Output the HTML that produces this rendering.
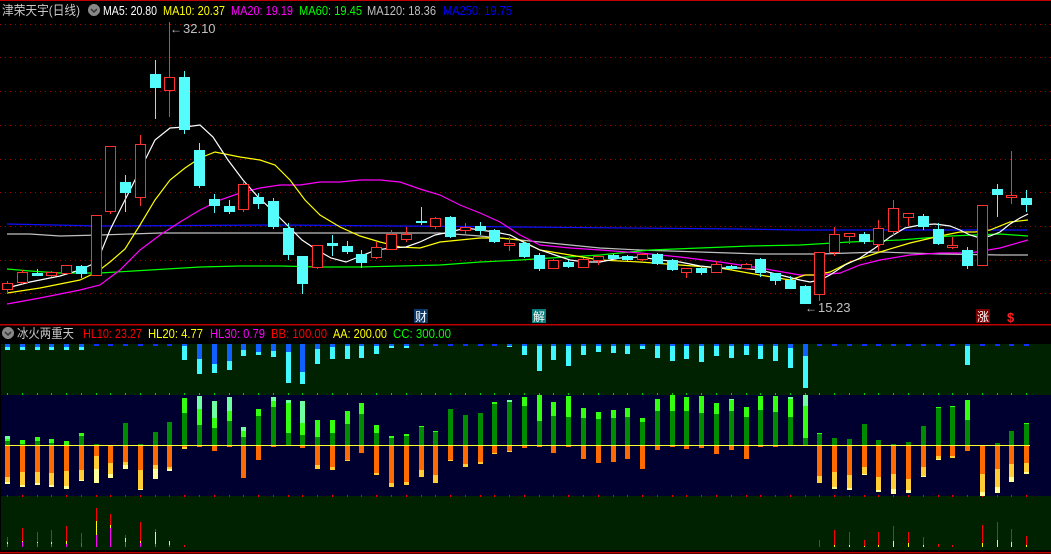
<!DOCTYPE html>
<html><head><meta charset="utf-8"><style>
html,body{margin:0;padding:0;background:#000;}
body{width:1051px;height:554px;overflow:hidden;position:relative;font-family:"Liberation Sans","Noto Sans CJK SC",sans-serif;}
svg{position:absolute;left:0;top:0;}
.t{font-size:13px;}
</style></head><body>
<svg id="s" width="1051" height="554" xmlns="http://www.w3.org/2000/svg" shape-rendering="crispEdges">
<rect x="0" y="0" width="1051" height="554" fill="#000"/>
<line x1="0" y1="0.5" x2="1051" y2="0.5" stroke="#c00000"/>
<g id="grid"></g>
<g id="ma" shape-rendering="auto"></g>
<g id="cd"></g>
<!-- header -->
<text x="2" y="15" class="t" fill="#c8c8c8" textLength="78" lengthAdjust="spacingAndGlyphs">津荣天宇(日线)</text>
<circle cx="94" cy="10" r="6" fill="#888"/>
<path d="M91 9 L94 12 L97 9" stroke="#333" stroke-width="1.5" fill="none" shape-rendering="auto"/>
<text x="103" y="15" class="t" fill="#ffffff" textLength="54" lengthAdjust="spacingAndGlyphs">MA5: 20.80</text>
<text x="163" y="15" class="t" fill="#ffff00" textLength="62" lengthAdjust="spacingAndGlyphs">MA10: 20.37</text>
<text x="231" y="15" class="t" fill="#ff00ff" textLength="62" lengthAdjust="spacingAndGlyphs">MA20: 19.19</text>
<text x="299" y="15" class="t" fill="#00ff00" textLength="63" lengthAdjust="spacingAndGlyphs">MA60: 19.45</text>
<text x="367" y="15" class="t" fill="#c0c0c0" textLength="69" lengthAdjust="spacingAndGlyphs">MA120: 18.36</text>
<text x="443" y="15" class="t" fill="#0000ff" textLength="69" lengthAdjust="spacingAndGlyphs">MA250: 19.75</text>
<!-- high/low labels -->
<text x="170" y="33" font-size="12" fill="#c0c0c0">←</text>
<text x="183" y="33" class="t" fill="#c0c0c0">32.10</text>
<text x="805" y="312" font-size="12" fill="#c0c0c0">←</text>
<text x="818" y="312" class="t" fill="#c0c0c0">15.23</text>
<!-- markers -->
<rect x="414" y="309" width="14" height="14" fill="#0b3a6a"/>
<text x="415" y="321" font-size="12" fill="#fff">财</text>
<rect x="532" y="309" width="14" height="14" fill="#0a7a7a"/>
<text x="533" y="321" font-size="12" fill="#fff">解</text>
<rect x="976" y="309" width="14" height="14" fill="#7a0000"/>
<text x="977" y="321" font-size="12" fill="#fff">涨</text>
<text x="1007" y="322" font-size="13" font-weight="bold" fill="#ff2020">$</text>
<line x1="0" y1="324.5" x2="1051" y2="324.5" stroke="#c00000" stroke-width="1.5"/>
<!-- indicator header -->
<circle cx="8" cy="333" r="6" fill="#888"/>
<path d="M5 332 L8 335 L11 332" stroke="#333" stroke-width="1.5" fill="none" shape-rendering="auto"/>
<text x="17" y="338" class="t" fill="#c8c8c8" textLength="57" lengthAdjust="spacingAndGlyphs">冰火两重天</text>
<text x="83" y="338" class="t" fill="#ff0000" textLength="59" lengthAdjust="spacingAndGlyphs">HL10: 23.27</text>
<text x="148" y="338" class="t" fill="#ffff00" textLength="55" lengthAdjust="spacingAndGlyphs">HL20: 4.77</text>
<text x="210" y="338" class="t" fill="#ff00ff" textLength="55" lengthAdjust="spacingAndGlyphs">HL30: 0.79</text>
<text x="271" y="338" class="t" fill="#ff0000" textLength="56" lengthAdjust="spacingAndGlyphs">BB: 100.00</text>
<text x="333" y="338" class="t" fill="#ffff00" textLength="54" lengthAdjust="spacingAndGlyphs">AA: 200.00</text>
<text x="393" y="338" class="t" fill="#00ff00" textLength="58" lengthAdjust="spacingAndGlyphs">CC: 300.00</text>
<rect x="1" y="344" width="1050" height="51" fill="#002200"/>
<rect x="1" y="395" width="1050" height="101" fill="#000030"/>
<rect x="1" y="496" width="1050" height="54" fill="#002200"/>
<g id="ind"></g>
<line x1="5" y1="445.5" x2="1030" y2="445.5" stroke="#ffff33" stroke-width="1.2"/>
<line x1="0" y1="552.5" x2="1051" y2="552.5" stroke="#c00000" stroke-width="1.5"/>
</svg>
<script>
var NS="http://www.w3.org/2000/svg";
function el(g,tag,a){var e=document.createElementNS(NS,tag);for(var k in a)e.setAttribute(k,a[k]);document.getElementById(g).appendChild(e);return e;}
function X(i){return 7+i*14.77;}
[24,57,91,125,159,192,226,260,293].forEach(function(y){el("grid","line",{x1:0,x2:1051,y1:y+0.5,y2:y+0.5,stroke:"#a00000","stroke-dasharray":"1 4"});});
var MA=[
["#c0c0c0",[[7,234],[30,234],[60,236],[100,235],[160,233],[240,233],[300,233],[360,233],[440,233],[480,236],[520,240],[560,244],[600,248],[640,250],[700,252],[760,254],[820,254],[880,252],[940,254],[1000,255],[1028,255]]],
["#1010ff",[[7,224],[100,226],[280,225],[520,227],[740,229],[800,230],[1028,230]]],
["#00ff00",[[7,269],[30,271],[60,273],[100,273],[150,270],[200,267],[240,266],[280,266],[320,267],[360,267],[400,266],[440,265],[480,262],[520,260],[550,258],[600,255],[650,250],[700,248],[750,246],[800,245],[850,242],[900,240],[950,236],[1000,234],[1028,236]]],
["#ff00ff",[[7,304],[40,298],[80,290],[100,285],[120,270],[140,250],[160,235],[180,222],[200,210],[220,200],[240,193],[260,188],[280,185],[300,185],[320,182],[340,182],[360,180],[380,180],[400,182],[420,189],[440,195],[460,205],[480,213],[500,222],[520,235],[540,245],[570,248],[600,250],[640,253],[680,257],[720,262],[760,268],[800,275],[820,275],[840,273],[860,265],[880,260],[910,255],[940,253],[970,253],[1000,248],[1028,240]]],
["#ffff00",[[7,293],[40,288],[80,280],[97,272],[110,262],[125,249],[140,225],[155,200],[170,180],[185,168],[200,158],[215,152],[240,157],[260,160],[275,165],[290,180],[305,200],[320,215],[340,227],[360,236],[380,242],[400,247],[420,248],[440,242],[460,240],[480,238],[500,238],[520,240],[540,250],[570,255],[600,260],[640,262],[680,265],[720,268],[760,275],[790,280],[805,275],[815,275],[830,272],[850,262],[880,252],[910,243],[940,236],[960,232],[975,232],[990,230],[1010,222],[1028,220]]],
["#ffffff",[[7,288],[30,282],[60,276],[80,270],[97,262],[110,230],[125,200],[140,170],[155,140],[170,128],[185,127],[200,125],[213,137],[228,160],[243,180],[258,197],[272,210],[287,225],[302,240],[317,250],[331,258],[346,262],[361,256],[376,250],[391,248],[406,247],[420,242],[435,235],[450,232],[466,228],[480,230],[495,232],[510,235],[525,243],[540,250],[555,255],[570,260],[585,262],[600,262],[620,258],[640,257],[660,260],[680,262],[700,266],[720,268],[740,268],[760,270],[780,275],[800,280],[810,282],[820,280],[830,275],[845,265],[860,258],[875,248],[890,237],[905,228],[920,225],[935,224],[950,226],[960,230],[970,235],[980,238],[990,236],[1000,232],[1010,224],[1020,218],[1028,214]]]
];
MA.forEach(function(m){el("ma","polyline",{points:m[1].map(function(p){return p.join(",")}).join(" "),fill:"none",stroke:m[0],"stroke-width":1.2});});
var C=[["r",283,289,281,292],["r",272,282,270,283],["c",273,275,269,275],["r",272,275,271,276],["r",265,273,265,273],["c",266,273,265,277],["r",215,275,215,275],["r",146,211,146,213],["c",182,192,175,211],["r",144,197,135,205],["c",74,87,60,118],["r",77,90,22,116],["c",77,129,71,133],["c",150,185,143,187],["c",199,205,194,212],["c",206,211,200,213],["r",184,209,182,211],["c",197,203,193,208],["c",201,226,198,228],["c",228,254,223,259],["c",256,283,256,293],["r",245,267,245,268],["c",243,245,235,255],["c",246,251,241,253],["c",254,262,250,267],["r",247,257,242,258],["r",234,249,230,249],["r",234,239,227,241],["c",221,222,207,224],["r",218,226,217,228],["c",217,236,216,237],["r",227,230,223,233],["c",226,230,222,234],["c",230,241,229,242],["r",243,245,237,250],["c",243,256,242,257],["c",255,268,253,270],["r",260,268,259,268],["c",262,266,260,267],["r",259,267,258,267],["r",256,260,256,264],["c",255,258,254,259],["c",256,259,255,260],["r",254,259,253,260],["c",254,263,253,264],["c",260,269,259,270],["r",268,272,268,277],["c",268,272,266,274],["r",264,272,261,272],["c",266,268,265,269],["r",264,268,263,268],["c",259,272,258,276],["c",273,280,273,284],["c",280,288,276,288],["c",286,303,285,303],["r",252,294,252,300],["r",234,252,227,255],["r",233,236,233,243],["c",234,241,232,243],["r",228,244,220,250],["r",208,231,200,235],["r",213,217,213,225],["c",216,226,214,229],["c",229,243,223,244],["r",245,247,237,248],["c",250,265,247,268],["r",205,265,205,265],["c",189,194,184,216],["r",195,197,151,203],["c",198,204,190,211]];
C.forEach(function(c,i){var x=Math.round(X(i));var col=c[0]=="r"?"#ff3232":"#54fcfc";
 el("cd","line",{x1:x+0.5,x2:x+0.5,y1:c[3],y2:c[4]+1,stroke:col});
 var h=c[2]-c[1];
 if(h<=1){el("cd","rect",{x:x-5,y:c[1],width:11,height:2,fill:col});}
 else if(c[0]=="r"){el("cd","rect",{x:x-4.5,y:c[1]+0.5,width:10,height:h,fill:"#000",stroke:col});}
 else{el("cd","rect",{x:x-5,y:c[1],width:11,height:h+1,fill:col});}
});
var U=[[436,439,441],[440,440,444],[437,437,441],[439,439,443],[441,441,445],[433,433,436],[444,444,444],[445,445,445],[423,423,423],[444,444,444],[432,432,432],[422,422,422],
[398,398,413],[396,409,425],[401,418,428],[397,411,421],[427,431,437],[409,409,416],[397,401,407],[400,403,433],[401,423,435],[420,420,437],[420,420,433],[411,411,424],[403,403,414],[425,425,433],[436,436,438],[434,434,436],[426,426,427],[431,431,432],[409,409,409],[415,415,415],[413,413,413],[402,402,404],[400,402,402],[397,397,406],[395,395,421],
[402,402,416],[396,396,417],[408,408,418],[412,412,419],[410,410,418],[408,408,417],[418,418,422],[399,399,411],[395,395,411],[397,397,411],[396,396,413],[403,403,414],[399,400,411],[407,407,417],[396,396,410],[396,396,412],[397,399,417],[395,406,438],
[433,433,434],[438,438,438],[439,439,439],[424,424,424],[440,440,440],[444,444,444],[442,442,442],[426,426,426],[407,407,408],[406,406,407],[400,400,420],[445,445,445],[443,443,443],[431,431,431],[423,423,424]];
var D=[[477,482,484],[472,485,487],[472,483,485],[473,485,487],[471,486,489],[470,480,481],[456,469,483],[463,474,478],[462,465,469],[470,489,490],[465,469,479],[467,469,471],
[447,449,449],[447,447,447],[451,451,451],[447,447,447],[478,478,478],[460,460,460],[447,447,447],[446,446,446],[448,448,448],[465,469,469],[467,470,470],[460,461,461],[453,453,453],[473,475,475],[483,487,487],[482,485,485],[470,477,477],[475,483,483],[460,461,461],[464,467,467],[462,464,464],[453,454,454],[451,452,452],[448,448,448],[447,447,447],
[453,453,453],[447,447,447],[459,459,459],[463,463,463],[462,462,462],[459,459,459],[469,469,469],[450,450,450],[447,447,447],[449,449,449],[448,448,448],[454,454,454],[450,450,450],[459,459,459],[447,447,447],[447,447,447],[446,446,446],[445,445,445],
[476,483,483],[472,487,489],[475,488,490],[467,474,475],[477,490,492],[474,489,494],[479,490,493],[467,476,477],[456,459,460],[456,458,458],[451,451,451],[474,492,496],[469,487,493],[464,477,482],[463,472,474]];
var T=[[347,350],[347,350],[347,350],[347,350],[347,350],[347,350],[346,346],[346,346],[346,346],[346,346],[346,346],[346,346],
[344,360],[359,374],[364,373],[361,370],[350,356],[352,355],[351,357],[352,383],[372,384],[349,364],[347,359],[345,359],[345,358],[345,354],[345,348],[345,348],[346,346],[345,346],[345,346],[345,346],[345,346],[345,346],[345,347],[345,355],[345,371],
[345,360],[345,366],[345,355],[345,352],[345,353],[345,354],[345,349],[345,358],[345,361],[345,359],[345,362],[345,356],[345,358],[345,355],[345,359],[345,361],[348,368],[356,388],
[345,346],[346,346],[346,346],[346,346],[346,346],[346,346],[346,346],[346,346],[345,346],[345,346],[345,365],[346,346],[346,346],[346,346],[345,346]];
var B={0:[537,542,544],1:[528,541,542],2:[532,542,543],3:[530,542,544],4:[526,541,544],5:[533,543,543],6:[508,521,535],7:[514,525,528],8:[535,538,542],9:[522,541,543],10:[529,532,544],11:[541,541,545],12:[545,547,547],
55:[540,547,547],56:[530,545,547],57:[532,545,547],58:[540,546,547],59:[532,545,547],60:[526,541,547],61:[532,543,547],62:[537,545,547],63:[544,547,547],64:[545,547,547],66:[525,543,547],67:[522,540,547],68:[529,542,547],69:[536,545,547]};
function r(x,y1,y2,col){if(y2>y1)el("ind","rect",{x:x,y:y1,width:5,height:y2-y1,fill:col});}
for(var i=0;i<70;i++){var x=Math.round(X(i))-2;
 el("ind","rect",{x:x+2,y:393,width:1,height:2,fill:"#00cc00"});
 el("ind","rect",{x:x+2,y:495,width:1,height:2,fill:"#ee0000"});
 var t=T[i];
 if(t[0]>346){r(x,344,t[0],"#1060ff");r(x,t[0],t[1],"#40f8ff");}
 else{ if(t[1]<=346) r(x,344,346,"#1030ff"); else {r(x,344,346,"#1060ff");r(x,346,t[1],"#40f8ff");}}
 var u=U[i];r(x,u[0],u[1],"#70ffa0");r(x,u[1],u[2],"#33ff11");r(x,u[2],445,"#008c00");
 var d=D[i];r(x,445,d[0],"#ff6a00");r(x,d[0],d[1],"#ffcc33");r(x,d[1],d[2],"#ffff99");
 var b=B[i];if(b){var lx=x+2;
  el("ind","rect",{x:lx,y:b[0],width:1,height:b[1]-b[0],fill:"#ff0000"});
  if(b[2]>b[1])el("ind","rect",{x:lx,y:b[1],width:1,height:b[2]-b[1],fill:"#ffff00"});
  if(547>b[2])el("ind","rect",{x:lx,y:b[2],width:1,height:547-b[2],fill:"#ff00ff"});}
}
</script>
</body></html>
